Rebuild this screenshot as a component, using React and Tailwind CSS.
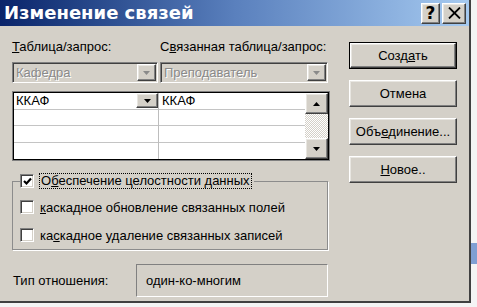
import React from 'react'

const raised = 'border border-t-white border-l-white border-b-[#404040] border-r-[#404040] shadow-[inset_-1px_-1px_0_#808080,inset_1px_1px_0_#e8e6e1]'
const sunken = 'border border-t-[#808080] border-l-[#808080] border-b-white border-r-white shadow-[inset_1px_1px_0_#404040,inset_-1px_-1px_0_#d4d0c8]'

function Arrow({ dir = 'down', color = '#000' }) {
  const pts = dir === 'down' ? '0,0 7,0 3.5,4' : '3.5,0 7,4 0,4'
  return (
    <svg width="7" height="4" viewBox="0 0 7 4"><polygon points={pts} fill={color} /></svg>
  )
}

function Combo({ text, width }) {
  return (
    <div className={'h-[21px] flex items-center bg-[#d4d0c8] ' + sunken + ' ' + width}>
      <span className="flex-1 pl-[3px] text-[#8a8a8a] [text-shadow:1px_1px_0_#fff] leading-none">{text}</span>
      <div className={'w-[19px] h-[17px] mr-[1px] flex items-center justify-center bg-[#d4d0c8] ' + raised}>
        <Arrow color="#8a8a8a" />
      </div>
    </div>
  )
}

function Check({ checked }) {
  return (
    <div className={'w-[14px] h-[14px] bg-white flex items-center justify-center shrink-0 ' + sunken}>
      {checked && (
        <svg width="9" height="9" viewBox="0 0 9 9"><path d="M1 4 L3.5 6.5 L8 1.5" stroke="#000" strokeWidth="2.2" fill="none" /></svg>
      )}
    </div>
  )
}

function Btn({ children, isDefault }) {
  return (
    <div className={'h-[27px] flex items-center justify-center bg-[#d4d0c8] ' + (isDefault ? 'border border-black' : '')}>
      <div className={'w-full h-full flex items-center justify-center ' + raised}>{children}</div>
    </div>
  )
}

export default function App() {
  const rows = [0, 1, 2, 3]
  return (
    <div className="w-[477px] h-[307px] bg-[#f4f4f4] overflow-hidden font-['Liberation_Sans',Arial,sans-serif] text-[13px] text-black">
      <div className="flex h-[303px]">
        <div className="w-[471px] h-[303px] bg-[#d4d0c8] border-r-2 border-b-2 border-r-[#404040] border-b-[#404040] flex flex-col">
          {/* title bar */}
          <div className="h-[26px] flex items-center bg-linear-to-r from-[#0a246a] via-[#5a80bd] to-[#a6caf0]">
            <span className="flex-1 pl-[4px] text-white font-bold text-[18px] font-['DejaVu_Sans',sans-serif] leading-none">Изменение связей</span>
            <div className={'w-[19px] h-[21px] flex items-center justify-center bg-[#d4d0c8] ' + raised}>
              <span className="font-bold text-[17px] leading-none font-['DejaVu_Sans',sans-serif]">?</span>
            </div>
            <div className={'w-[24px] h-[21px] ml-[2px] mr-[3px] flex items-center justify-center bg-[#d4d0c8] ' + raised}>
              <svg width="13" height="12" viewBox="0 0 13 12"><path d="M1 0.5 L12 11.5 M12 0.5 L1 11.5" stroke="#000" strokeWidth="1.8" /></svg>
            </div>
          </div>

          {/* body */}
          <div className="flex-1 flex pl-[12px]">
            <div className="w-[318px] flex flex-col">
              <div className="mt-[13px] h-[16px] leading-[16px] flex">
                <span className="w-[148px]"><u>Т</u>аблица/запрос:</span>
                <span>С<u>в</u>язанная таблица/запрос:</span>
              </div>
              <div className="mt-[7px] flex gap-[2px]">
                <Combo text="Кафедра" width="w-[146px]" />
                <Combo text="Преподаватель" width="w-[168px]" />
              </div>

              <div className="mt-[8px] h-[70px] flex bg-white border border-[#808080] shadow-[inset_1px_1px_0_#000,inset_-1px_-1px_0_#000] p-[1px]">
                <div className="w-[145px] border-r border-[#bdbdbd] flex flex-col">
                  {rows.map(i => (
                    <div key={i} className={'h-[17px] flex items-center ' + (i < 3 ? 'border-b border-[#c4c4c4]' : '')}>
                      {i === 0 && (
                        <>
                          <span className="flex-1 pl-[2px] leading-none">ККАФ</span>
                          <div className={'w-[22px] h-[15px] flex items-center justify-center bg-[#d4d0c8] ' + raised}>
                            <Arrow />
                          </div>
                        </>
                      )}
                    </div>
                  ))}
                </div>
                <div className="flex-1 flex flex-col">
                  {rows.map(i => (
                    <div key={i} className={'h-[17px] flex items-center ' + (i < 3 ? 'border-b border-[#c4c4c4]' : '')}>
                      {i === 0 && <span className="pl-[3px] leading-none">ККАФ</span>}
                    </div>
                  ))}
                </div>
                <div className="w-[23px] flex flex-col">
                  <div className={'h-[21px] flex items-center justify-center bg-[#d4d0c8] ' + raised}><Arrow dir="up" /></div>
                  <div className="flex-1 bg-[repeating-conic-gradient(#ffffff_0_25%,#d4d0c8_0_50%)] bg-[length:2px_2px]" />
                  <div className={'h-[21px] flex items-center justify-center bg-[#d4d0c8] ' + raised}><Arrow /></div>
                </div>
              </div>

              <fieldset className="mt-[12px] w-[316px] border border-[#8c8c8c] shadow-[1px_1px_0_#fff] px-[7px] pb-[7px]">
                <legend className="flex items-center gap-[5px] pr-[2px]">
                  <Check checked />
                  <span className="border border-dotted border-black px-[1px] h-[16px] leading-[14px]">О<u>б</u>еспечение целостности данных</span>
                </legend>
                <div className="mt-[11px] flex items-center gap-[6px]">
                  <Check />
                  <span className="leading-none"><u>к</u>аскадное обновление связанных полей</span>
                </div>
                <div className="mt-[14px] flex items-center gap-[6px]">
                  <Check />
                  <span className="leading-none">ка<u>с</u>кадное удаление связанных записей</span>
                </div>
              </fieldset>

              <div className="mt-[14px] h-[33px] flex items-center">
                <span className="w-[124px] pl-[1px]">Тип отношения:</span>
                <div className="w-[192px] h-full flex items-center pl-[9px] border border-t-[#808080] border-l-[#808080] border-b-white border-r-white">
                  один-ко-многим
                </div>
              </div>
            </div>

            <div className="ml-[19px] w-[108px] pt-[16px] flex flex-col gap-[11px]">
              <Btn isDefault>Созд<u>а</u>ть</Btn>
              <Btn>Отмена</Btn>
              <Btn>Объ<u>е</u>динение...</Btn>
              <Btn><u>Н</u>овое..</Btn>
            </div>
          </div>
        </div>
        <div className="w-[6px] flex flex-col">
          <div className="h-[243px]" />
          <div className="h-[21px] bg-[#7f9fd3]" />
        </div>
      </div>
    </div>
  )
}
